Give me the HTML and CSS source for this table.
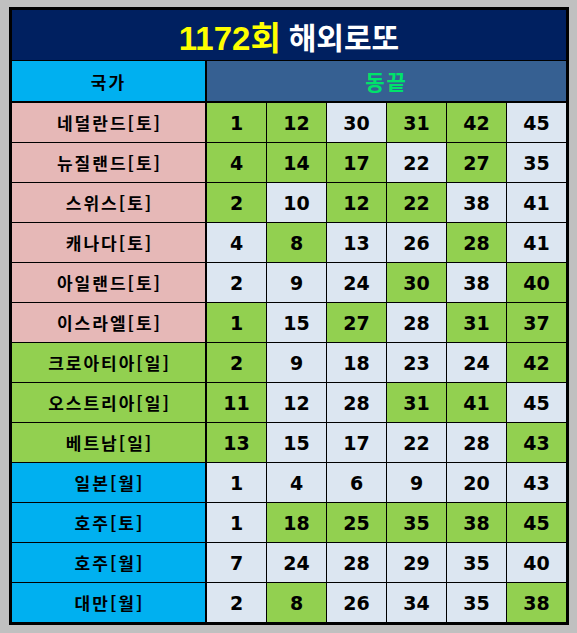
FILE: index.html
```html
<!DOCTYPE html>
<html lang="ko">
<head>
<meta charset="utf-8">
<title>1172회 해외로또</title>
<link rel="stylesheet" href="styles.css">
</head>
<body>
<div class="board">
  <div class="grid">
    <div class="title"><span class="round">1172회</span><span class="name">해외로또</span></div>
    <div class="hd country-hd">국가</div>
    <div class="hd nums-hd">동끝</div>

    <div class="c pink">네덜란드[토]</div>
    <div class="n g">1</div><div class="n g">12</div><div class="n l">30</div><div class="n g">31</div><div class="n g">42</div><div class="n l">45</div>

    <div class="c pink">뉴질랜드[토]</div>
    <div class="n g">4</div><div class="n g">14</div><div class="n g">17</div><div class="n l">22</div><div class="n g">27</div><div class="n l">35</div>

    <div class="c pink">스위스[토]</div>
    <div class="n g">2</div><div class="n l">10</div><div class="n g">12</div><div class="n g">22</div><div class="n l">38</div><div class="n l">41</div>

    <div class="c pink">캐나다[토]</div>
    <div class="n l">4</div><div class="n g">8</div><div class="n l">13</div><div class="n l">26</div><div class="n g">28</div><div class="n l">41</div>

    <div class="c pink">아일랜드[토]</div>
    <div class="n l">2</div><div class="n l">9</div><div class="n l">24</div><div class="n g">30</div><div class="n l">38</div><div class="n g">40</div>

    <div class="c pink">이스라엘[토]</div>
    <div class="n g">1</div><div class="n l">15</div><div class="n g">27</div><div class="n l">28</div><div class="n g">31</div><div class="n g">37</div>

    <div class="c green">크로아티아[일]</div>
    <div class="n g">2</div><div class="n l">9</div><div class="n l">18</div><div class="n l">23</div><div class="n l">24</div><div class="n g">42</div>

    <div class="c green">오스트리아[일]</div>
    <div class="n g">11</div><div class="n l">12</div><div class="n l">28</div><div class="n g">31</div><div class="n g">41</div><div class="n l">45</div>

    <div class="c green">베트남[일]</div>
    <div class="n g">13</div><div class="n l">15</div><div class="n l">17</div><div class="n l">22</div><div class="n l">28</div><div class="n g">43</div>

    <div class="c cyan">일본[월]</div>
    <div class="n l">1</div><div class="n l">4</div><div class="n l">6</div><div class="n l">9</div><div class="n l">20</div><div class="n l">43</div>

    <div class="c cyan">호주[토]</div>
    <div class="n l">1</div><div class="n g">18</div><div class="n g">25</div><div class="n g">35</div><div class="n g">38</div><div class="n g">45</div>

    <div class="c cyan">호주[월]</div>
    <div class="n l">7</div><div class="n l">24</div><div class="n l">28</div><div class="n l">29</div><div class="n l">35</div><div class="n l">40</div>

    <div class="c cyan">대만[월]</div>
    <div class="n l">2</div><div class="n g">8</div><div class="n l">26</div><div class="n l">34</div><div class="n l">35</div><div class="n g">38</div>
  </div>
</div>
</body>
</html>
```

FILE: styles.css
```css
html, body {
  margin: 0;
  padding: 0;
  background: #c0c0c0;
}
body {
  padding: 7px 0 0 9px;
}
.board {
  width: 554px;
  border: 3px solid #000;
  background: #000;
}
.grid {
  display: grid;
  grid-template-columns: 194px repeat(6, 59px);
  grid-template-rows: 50px 41px repeat(13, 39px);
  gap: 1px;
  background: #000;
  font-family: "Noto Sans CJK KR", "Liberation Sans", sans-serif;
  font-weight: 700;
  color: #000;
}
.title {
  grid-column: 1 / -1;
  background: #002060;
  display: flex;
  align-items: center;
  justify-content: center;
  gap: 8px;
  padding-top: 1px;
}
.title .round {
  color: #ffff00;
  font-family: "Liberation Sans", "Noto Sans CJK KR", sans-serif;
  font-size: 33px;
  font-weight: 700;
}
.title .name {
  color: #ffffff;
  font-family: "Noto Sans CJK KR", sans-serif;
  font-size: 30px;
  font-weight: 700;
}
.hd {
  height: 40px;
  display: flex;
  align-items: center;
  justify-content: center;
  font-size: 17px;
  letter-spacing: 2px;
}
.country-hd {
  width: 193px;
  background: #00b0f0;
}
.nums-hd {
  grid-column: 2 / -1;
  background: #366092;
  color: #00e36a;
  font-size: 21px;
}
.c {
  width: 193px;
  display: flex;
  align-items: center;
  justify-content: center;
  font-size: 17px;
  letter-spacing: 2px;
  padding-left: 2px;
  box-sizing: border-box;
}
.pink { background: #e6b8b7; }
.green { background: #92d050; }
.cyan { background: #00b0f0; }
.n {
  display: flex;
  align-items: center;
  justify-content: center;
  font-family: "DejaVu Sans", "Liberation Sans", sans-serif;
  font-size: 19px;
  font-weight: 700;
  padding-top: 1px;
}
.g { background: #92d050; }
.l { background: #dce6f1; }
```
